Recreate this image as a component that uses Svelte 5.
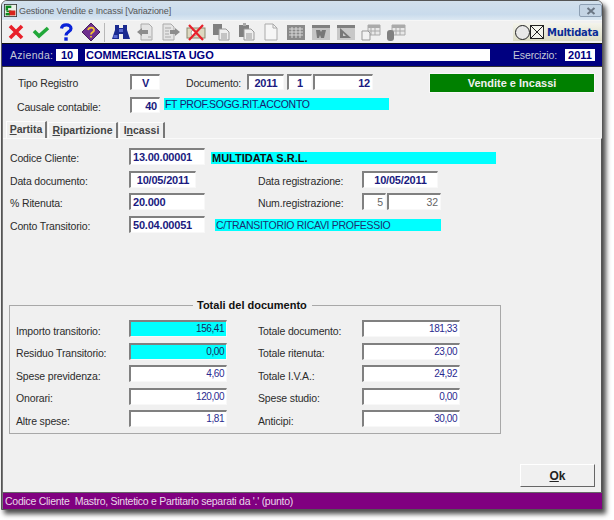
<script>
  const totalsLeft = [
    ['Importo transitorio:', '156,41', true],
    ['Residuo Transitorio:', '0,00', true],
    ['Spese previdenza:', '4,60', false],
    ['Onorari:', '120,00', false],
    ['Altre spese:', '1,81', false]
  ];
  const totalsRight = [
    ['Totale documento:', '181,33'],
    ['Totale ritenuta:', '23,00'],
    ['Totale I.V.A.:', '24,92'],
    ['Spese studio:', '0,00'],
    ['Anticipi:', '30,00']
  ];
</script>

<div class="stage">
  <div class="window">
    <header class="titlebar">
      <svg class="appicon" viewBox="0 0 16 16" width="13" height="13">
        <rect x="0.5" y="0.5" width="15" height="15" fill="#e9efe6" stroke="#333" />
        <rect x="2" y="2" width="7" height="3" fill="#0a8a1e" />
        <rect x="2" y="5" width="3" height="3" fill="#0a8a1e" />
        <rect x="3" y="8" width="6" height="2" fill="#0a8a1e" />
        <rect x="6" y="8" width="8" height="6" fill="#d8241c" />
        <rect x="2" y="11" width="5" height="3" fill="#0a8a1e" />
      </svg>
      <span class="title">Gestione Vendite e Incassi [Variazione]</span>
      <span class="close">
        <svg viewBox="0 0 10 8" width="10" height="8"><path d="M1.5 1 8.5 7M8.5 1 1.5 7" stroke="#6b7684" stroke-width="2" fill="none" /></svg>
      </span>
    </header>

    <nav class="toolbar">
      <span class="tool"><svg viewBox="0 0 20 20"><path d="M4 4 16 16M16 4 4 16" stroke="#e8202a" stroke-width="3.6" fill="none" /></svg></span>
      <span class="tool"><svg viewBox="0 0 20 20"><path d="M3 9 8 14 17 6" stroke="#22a83a" stroke-width="3.6" fill="none" /></svg></span>
      <span class="tool"><svg viewBox="0 0 20 20"><path d="M5.500 6.500C6 1.800 15 1.500 15 6.500C15 10 10 9.500 10 13.500" stroke="#0a22d8" stroke-width="3.2" fill="none" /><rect x="8.300" y="15.300" width="3.400" height="3.400" fill="#0a22d8" /></svg></span>
      <span class="tool"><svg viewBox="0 0 20 20"><path d="M10 1 19 10 10 19 1 10Z" fill="#6f2f8f" stroke="#4a2060" /><path d="M7 8C8 4.500 13.500 5 13 8.500C12.700 10.500 10 10 10 12.500M10 14v1.500" stroke="#f2c230" stroke-width="1.800" fill="none" /></svg></span>
      <span class="sep"></span>
      <span class="tool"><svg viewBox="0 0 20 20"><path d="M4 3h4v3h4V3h4v5l3 9h-7v-5H8v5H1l3-9Z" fill="#1a2a90" /><rect x="8" y="7" width="4" height="3" fill="#5a6ad0" /><rect x="2.500" y="13" width="4" height="3" fill="#5a6ad0" /></svg></span>
      <span class="tool"><svg viewBox="0 0 20 20"><path d="M5 2h8l3 3v13H5Z" fill="#e4e4e4" stroke="#aaa" /><path d="M1 10 6 6v2h6v4H6v2Z" fill="#8c8c8c" /><path d="M12 15h3" stroke="#aaa" /></svg></span>
      <span class="tool"><svg viewBox="0 0 20 20"><path d="M2 2h8l3 3v13H2Z" fill="#e4e4e4" stroke="#aaa" /><path d="M4 6h6M4 9h4M4 12h4M4 15h6" stroke="#aaa" /><path d="M19 10 14 6v2H9v4h5v2Z" fill="#8c8c8c" /></svg></span>
      <span class="tool"><svg viewBox="0 0 20 20"><rect x="1" y="6" width="18" height="10" fill="#ddd8c0" stroke="#8a8a70" /><circle cx="8" cy="11" r="3" fill="#fff" stroke="#aaa" /><path d="M3 3 17 18M17 3 3 18" stroke="#e8202a" stroke-width="2.200" fill="none" /></svg></span>
      <span class="tool"><svg viewBox="0 0 20 20"><path d="M2 2h9v11H2Z" fill="#808080" /><path d="M8 7h7l3 3v8H8Z" fill="#eee" stroke="#999" /><path d="M10 12h6M10 14h6M10 16h6" stroke="#999" /></svg></span>
      <span class="tool"><svg viewBox="0 0 20 20"><path d="M3 3h10v12H3Z" fill="#808080" /><path d="M7 1h3v3H7Z" fill="#aaa" /><path d="M8 7h7l3 3v8H8Z" fill="#eee" stroke="#999" /><path d="M10 12h6M10 14h6M10 16h6" stroke="#999" /></svg></span>
      <span class="tool"><svg viewBox="0 0 20 20"><path d="M4 2h8l4 4v12H4Z" fill="#f6f6f6" stroke="#aaa" /><path d="M12 2v4h4" fill="none" stroke="#aaa" /></svg></span>
      <span class="tool"><svg viewBox="0 0 20 20"><rect x="1" y="3" width="18" height="15" fill="#8a8a8a" /><path d="M3 7h14M3 10h14M3 13h14M6 5v11M10 5v11M14 5v11" stroke="#d8d8d8" /></svg></span>
      <span class="tool"><svg viewBox="0 0 20 20"><rect x="1" y="3" width="18" height="15" fill="#c4c4c4" /><rect x="1" y="3" width="18" height="3" fill="#808080" /><path d="M5 8h4l1 2 1-2h4l-2 8h-3l-1-3-1 3H6Z" fill="#777" /></svg></span>
      <span class="tool"><svg viewBox="0 0 20 20"><rect x="1" y="3" width="18" height="15" fill="#c8c8c8" /><rect x="1" y="3" width="18" height="3" fill="#808080" /><path d="M4 6v10h11Z" fill="#777" /><path d="M7 11v3h3Z" fill="#ccc" /></svg></span>
      <span class="tool"><svg viewBox="0 0 20 20"><path d="M7 3h12v10H7Z" fill="#e8e8e8" stroke="#aaa" /><path d="M7 3h12v3H7Z" fill="#aaa" /><path d="M10 6v7M14 6v7M7 9h12" stroke="#aaa" /><path d="M1 9h6l2 2v7H1Z" fill="#f2f2f2" stroke="#999" /></svg></span>
      <span class="tool"><svg viewBox="0 0 20 20"><path d="M6 3h13v10H6Z" fill="#e8e8e8" stroke="#aaa" /><path d="M6 3h13v3H6Z" fill="#aaa" /><path d="M10 6v7M14 6v7M6 9h13" stroke="#aaa" /><rect x="1" y="8" width="7" height="11" rx="3" fill="#808080" /></svg></span>

      <div class="logo">
        <span class="circle"></span>
        <svg class="cross" viewBox="0 0 14 14" width="14" height="14"><rect x="0.500" y="0.500" width="13" height="13" fill="#f4f4ec" stroke="#222" /><path d="M1 1 13 13M13 1 1 13" stroke="#222" /></svg>
        <span class="brand">Multidata</span>
      </div>
    </nav>

    <section class="company">
      <span class="c-label azienda">Azienda:</span>
      <span class="c-code">10</span>
      <span class="c-name">COMMERCIALISTA UGO</span>
      <span class="c-label esercizio">Esercizio:</span>
      <span class="c-year">2011</span>
    </section>

    <main class="content">
      <section class="head">
        <div class="row r1">
          <span class="lab w-top">Tipo Registro</span>
          <span class="box bold center w-code">V</span>
          <span class="lab doc">Documento:</span>
          <span class="box bold center w-yr">2011</span>
          <span class="box bold center w-one">1</span>
          <span class="box bold right w-num">12</span>
          <span class="green">Vendite e Incassi</span>
        </div>
        <div class="row r2">
          <span class="lab w-top causale">Causale contabile:</span>
          <span class="box bold right w-code">40</span>
          <span class="cyan causale-desc">FT PROF.SOGG.RIT.ACCONTO</span>
        </div>
      </section>

      <div class="tabs">
        <span class="tab active t1"><u>P</u>artita</span>
        <span class="tab t2"><u>R</u>ipartizione</span>
        <span class="tab t3">I<u>n</u>cassi</span>
      </div>

      <section class="panel">
        <div class="fields">
          <div class="row f1">
            <span class="lab w-f">Codice Cliente:</span>
            <span class="box bold w-long">13.00.00001</span>
            <span class="cyan strong client">MULTIDATA S.R.L.</span>
          </div>
          <div class="row f2">
            <span class="lab w-f">Data documento:</span>
            <span class="box bold center w-date">10/05/2011</span>
            <span class="lab reg">Data registrazione:</span>
            <span class="box bold center w-date2">10/05/2011</span>
          </div>
          <div class="row f3">
            <span class="lab w-f">% Ritenuta:</span>
            <span class="box bold w-long">20.000</span>
            <span class="lab reg2">Num.registrazione:</span>
            <span class="box off right w-n1">5</span>
            <span class="box off right w-n2">32</span>
          </div>
          <div class="row f4">
            <span class="lab w-f">Conto Transitorio:</span>
            <span class="box bold w-long">50.04.00051</span>
            <span class="cyan transit">C/TRANSITORIO RICAVI PROFESSIO</span>
          </div>
        </div>

        <fieldset class="totals">
          <legend>Totali del documento</legend>
          <div class="t-grid">
            <div class="t-col">
              {#each totalsLeft as [label, value, hi]}
                <div class="t-row">
                  <span class="t-lab">{label}</span>
                  <span class="box t-val" class:hi>{value}</span>
                </div>
              {/each}
            </div>
            <div class="t-col t-right">
              {#each totalsRight as [label, value]}
                <div class="t-row">
                  <span class="t-lab">{label}</span>
                  <span class="box t-val">{value}</span>
                </div>
              {/each}
            </div>
          </div>
        </fieldset>

        <div class="actions">
          <button class="ok"><u>O</u>k</button>
        </div>
      </section>
    </main>

    <footer class="status">Codice Cliente&nbsp; Mastro, Sintetico e Partitario separati da '.' (punto)</footer>
  </div>
</div>

<style>
  :global(body) {
    margin: 0;
    background: #fff;
  }
  .stage {
    width: 614px;
    height: 520px;
    padding: 0 11px 10px 1px;
    box-sizing: border-box;
    font-family: "Liberation Sans", Arial, sans-serif;
    font-size: 10.500px;
    letter-spacing: -0.150px;
    color: #2c2c2c;
    overflow: hidden;
  }
  .window {
    height: 510px;
    display: flex;
    flex-direction: column;
    background: #f0f0f0;
    border-style: solid;
    border-color: #555;
    border-width: 1px;
    border-radius: 6px 6px 0 0;
    box-sizing: border-box;
    box-shadow: 3px 4px 5px rgba(0, 0, 0, 0.7);
  }
  .titlebar {
    height: 19px;
    flex: none;
    display: flex;
    align-items: center;
    padding: 0 0 0 2px;
    background: linear-gradient(#d3e0ec, #c9dbec 70%, #dce8f2);
    border-radius: 5px 5px 0 0;
  }
  .appicon {
    flex: none;
  }
  .title {
    margin-left: 2px;
    font-size: 9px;
    letter-spacing: -0.100px;
    color: #555;
  }
  .close {
    margin-left: auto;
    width: 21px;
    height: 11px;
    display: flex;
    align-items: center;
    justify-content: center;
    background: #c4d4e4;
    border: 1px solid #8ea0b4;
    border-radius: 2px;
  }
  .toolbar {
    height: 22px;
    flex: none;
    display: flex;
    align-items: center;
    padding-left: 1px;
    border-top: 1px solid #f6f6f6;
    background: #f0f0f0;
  }
  .tool {
    width: 25px;
    height: 20px;
    flex: none;
    display: flex;
    align-items: center;
    justify-content: center;
  }
  .tool svg {
    width: 20px;
    height: 20px;
  }
  .sep {
    width: 1px;
    height: 19px;
    margin: 0 3px 0 1px;
    background: #b8b8b8;
    flex: none;
  }
  .logo {
    margin-left: auto;
    width: 89px;
    height: 18px;
    box-sizing: border-box;
    display: flex;
    align-items: center;
    padding-left: 2px;
    background: linear-gradient(#f4f4ec, #dcdcc4);
  }
  .circle {
    width: 13px;
    height: 13px;
    border: 1px solid #222;
    border-radius: 50%;
    background: #e8e8e8;
    flex: none;
  }
  .cross {
    flex: none;
  }
  .brand {
    margin-left: 3px;
    font-family: "DejaVu Sans", sans-serif;
    font-weight: 700;
    font-size: 10px;
    letter-spacing: -0.300px;
    color: #0a2c96;
  }
  .company {
    height: 24px;
    flex: none;
    box-sizing: border-box;
    display: flex;
    align-items: center;
    padding: 0 7px 0 8px;
    background: #000080;
    border-top: 1px solid #111;
    border-bottom: 1px solid #333;
  }
  .c-label {
    color: #c4c8d8;
    flex: none;
  }
  .azienda {
    width: 46px;
    letter-spacing: 0.300px;
  }
  .c-code,
  .c-name,
  .c-year {
    height: 12px;
    line-height: 12px;
    background: #fff;
    color: #000080;
    font-weight: 700;
    font-size: 11px;
    letter-spacing: 0;
    flex: none;
  }
  .c-code {
    width: 22px;
    text-align: center;
  }
  .c-name {
    width: 405px;
    margin-left: 7px;
    padding-left: 1px;
    box-sizing: border-box;
  }
  .esercizio {
    margin-left: auto;
  }
  .c-year {
    width: 30px;
    margin-left: 8px;
    text-align: center;
  }
  .content {
    flex: 1;
    min-height: 0;
    display: flex;
    flex-direction: column;
    border-left: 1px solid #777;
  }
  .head {
    height: 54px;
    flex: none;
    padding-top: 7px;
    box-sizing: border-box;
  }
  .row {
    display: flex;
    align-items: center;
  }
  .lab {
    flex: none;
    padding-top: 3px;
  }
  .r1 {
    padding-left: 15px;
    height: 18px;
    align-items: flex-start;
  }
  .r2 {
    padding-left: 14px;
    height: 16px;
    margin-top: 5px;
  }
  .w-top {
    width: 112px;
  }
  .causale {
    width: 113px;
  }
  .box {
    height: 16px;
    line-height: 14px;
    box-sizing: border-box;
    display: block;
    flex: none;
    background: #fff;
    border-style: solid;
    border-width: 2px 1px 1px 2px;
    border-color: #808080 #f8f8f8 #f8f8f8 #808080;
    padding: 0 2px;
    color: #000080;
    white-space: nowrap;
    overflow: hidden;
  }
  .bold {
    font-weight: 700;
    font-size: 11px;
    letter-spacing: -0.200px;
    color: #1a1a80;
  }
  .center {
    text-align: center;
  }
  .right {
    text-align: right;
  }
  .w-code {
    width: 30px;
  }
  .doc {
    width: 61px;
    margin-left: 26px;
  }
  .w-yr {
    width: 37px;
  }
  .w-one {
    width: 25px;
    margin-left: 3px;
  }
  .w-num {
    width: 60px;
    margin-left: 1px;
  }
  .green {
    margin-left: 57px;
    width: 164px;
    height: 18px;
    line-height: 18px;
    box-sizing: border-box;
    background: #008000;
    color: #f0f0f0;
    font-weight: 700;
    font-size: 11px;
    letter-spacing: 0;
    text-align: center;
    outline: 1px solid #f8f8f8;
  }
  .cyan {
    height: 12px;
    line-height: 12px;
    background: #00ffff;
    color: #1a1a70;
    flex: none;
    padding-left: 1px;
    box-sizing: border-box;
    white-space: nowrap;
    letter-spacing: -0.300px;
  }
  .causale-desc {
    width: 225px;
    margin-left: 4px;
    margin-top: -2px;
  }
  .tabs {
    height: 17px;
    flex: none;
    display: flex;
    align-items: flex-end;
    padding-left: 3px;
  }
  .tab {
    height: 16px;
    line-height: 14px;
    box-sizing: border-box;
    text-align: center;
    font-weight: 700;
    letter-spacing: 0;
    color: #444;
    border-right: 2px solid #777;
    border-left: 1px solid #fcfcfc;
    border-top: 1px solid #fcfcfc;
    white-space: nowrap;
  }
  .tab.active {
    height: 17px;
    line-height: 14px;
  }
  .t1 {
    width: 41px;
  }
  .t2 {
    width: 70px;
    margin-left: 1px;
  }
  .t3 {
    width: 46px;
    margin-left: 1px;
  }
  .panel {
    flex: 1;
    min-height: 0;
    display: flex;
    flex-direction: column;
    border-top: 1px solid #fafafa;
    border-right: 1px solid #555;
  }
  .fields {
    height: 159px;
    flex: none;
    padding: 9px 0 0 7px;
    box-sizing: border-box;
  }
  .fields .box {
    height: 17px;
    line-height: 14px;
  }
  .w-f {
    width: 119px;
  }
  .w-long {
    width: 76px;
  }
  .f2,
  .f3,
  .f4 {
    margin-top: 5.670px;
  }
  .client {
    width: 285px;
    margin-left: 6px;
    font-weight: 700;
    font-size: 11px;
    letter-spacing: 0;
    color: #111;
    margin-top: 2px;
  }
  .w-date {
    width: 67px;
  }
  .reg {
    width: 104px;
    margin-left: 62px;
  }
  .w-date2 {
    width: 76px;
  }
  .reg2 {
    width: 104px;
    margin-left: 53px;
  }
  .off {
    color: #666;
  }
  .w-n1 {
    width: 24px;
  }
  .w-n2 {
    width: 54px;
    margin-left: 1px;
  }
  .transit {
    width: 226px;
    margin-left: 10px;
    margin-top: 2px;
    color: #1a3070;
  }
  .totals {
    height: 136px;
    width: 480px;
    margin: 0 0 0 6px;
    padding: 0 0 0 6px;
    box-sizing: border-box;
    border: 1px solid #a8a8a8;
    flex: none;
  }
  .totals legend {
    font-weight: 700;
    font-size: 11px;
    letter-spacing: 0;
    color: #111;
    margin-left: 177px;
    padding: 0 5px 0 4px;
    line-height: 14px;
  }
  .t-grid {
    display: flex;
    padding-top: 8px;
  }
  .t-col {
    width: 242px;
    flex: none;
  }
  .t-row {
    height: 17px;
    margin-bottom: 5.500px;
    display: flex;
    align-items: center;
  }
  .t-lab {
    width: 113px;
    flex: none;
    padding-top: 4px;
  }
  .t-right .t-lab {
    width: 104px;
  }
  .t-val {
    width: 98px;
    height: 17px;
    text-align: right;
    font-size: 10px;
    letter-spacing: -0.450px;
    color: #2a2a90;
  }
  .t-val.hi {
    background: #00ffff;
    color: #1a2a60;
  }
  .actions {
    flex: 1;
    display: flex;
    justify-content: flex-end;
    align-items: flex-start;
    padding: 30px 6px 0 0;
  }
  .ok {
    width: 75px;
    height: 23px;
    padding: 0;
    font: 700 12px "Liberation Sans", Arial, sans-serif;
    color: #222;
    background: #f0f0f0;
    border-style: solid;
    border-width: 1px;
    border-color: #fff #666 #666 #fff;
  }
  .status {
    height: 17px;
    line-height: 16px;
    flex: none;
    box-sizing: border-box;
    padding-left: 2px;
    border-left: 1px solid #777;
    background: #800080;
    color: #e8d8e8;
    border-top: 1px solid #666;
    white-space: nowrap;
    letter-spacing: -0.270px;
  }
</style>
